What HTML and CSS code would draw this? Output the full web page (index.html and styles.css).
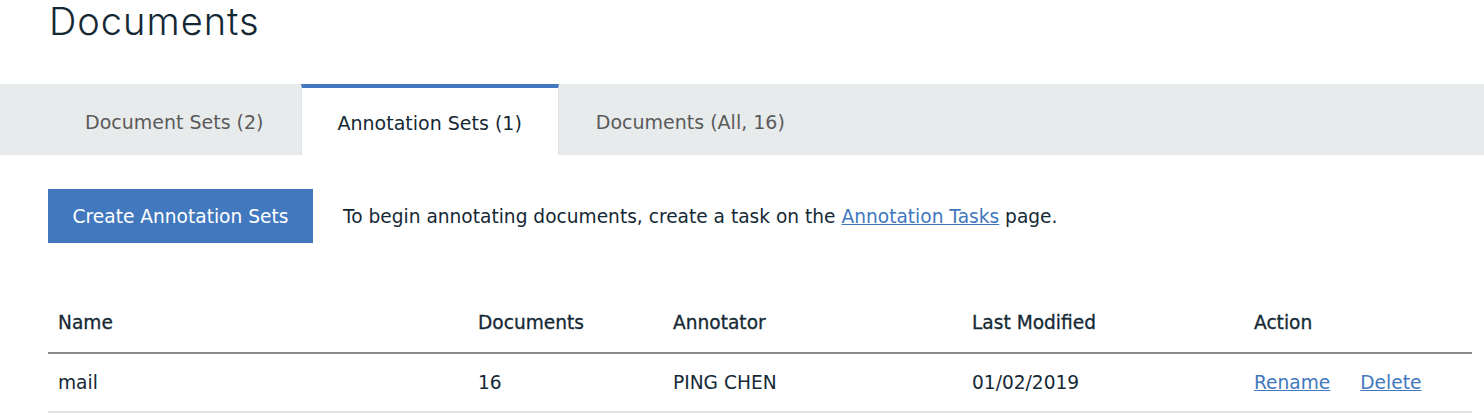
FILE: index.html
```html
<!DOCTYPE html>
<html>
<head>
<meta charset="utf-8">
<link rel="stylesheet" href="styles.css">
</head>
<body>
<h1 class="title">Documents</h1>
<div class="tabs">
  <div class="tab">Document Sets (2)</div>
  <div class="tab active">Annotation Sets (1)</div>
  <div class="tab">Documents (All, 16)</div>
</div>
<div class="toolbar">
  <button class="btn">Create Annotation Sets</button>
  <p class="hint">To begin annotating documents, create a task on the <a href="#" class="link">Annotation Tasks</a> page.</p>
</div>
<table class="table">
  <thead>
    <tr>
      <th class="c-name">Name</th>
      <th class="c-docs">Documents</th>
      <th class="c-ann">Annotator</th>
      <th class="c-mod">Last Modified</th>
      <th class="c-act">Action</th>
    </tr>
  </thead>
  <tbody>
    <tr>
      <td>mail</td>
      <td>16</td>
      <td>PING CHEN</td>
      <td>01/02/2019</td>
      <td><a href="#" class="link">Rename</a><a href="#" class="link gap">Delete</a></td>
    </tr>
  </tbody>
</table>
</body>
</html>
```
FILE: styles.css
```css
* { box-sizing: border-box; }
body {
  margin: 0;
  font-family: "DejaVu Sans", "Noto Sans", sans-serif;
  color: #152935;
  background: #fff;
  overflow: hidden;
}
.title {
  margin: 0;
  padding: 0 0 0 49px;
  height: 84px;
  font-family: Inter, "Noto Sans", sans-serif;
  font-size: 38px;
  font-weight: 300;
  letter-spacing: 1px;
  line-height: 42px;
  color: #152935;
}
.tabs {
  display: flex;
  height: 71px;
  background: #e8ebec;
  padding-left: 48px;
}
.tab {
  display: flex;
  align-items: center;
  padding: 0 37px;
  font-size: 19px;
  color: #5a5a5a;
  border-top: 4px solid transparent;
}
.tab.active {
  background: #fff;
  color: #152935;
  border-top: 4px solid #4178be;
  border-left: 1px solid #dfe3e6;
  border-right: 1px solid #dfe3e6;
  padding: 2px 36px 0;
}
.toolbar {
  display: flex;
  align-items: center;
  padding: 34px 0 0 48px;
  gap: 30px;
}
.btn {
  height: 54px;
  width: 265px;
  border: 0;
  background: #4178be;
  color: #fff;
  font-family: inherit;
  font-size: 18.6px;
  padding: 0;
}
.hint {
  margin: 0;
  font-size: 18.6px;
  color: #152935;
}
.link {
  color: #4178be;
  text-decoration: underline;
}
.table {
  margin: 50px 0 0 48px;
  width: 1424px;
  border-collapse: collapse;
  font-size: 18.6px;
}
.table th {
  text-align: left;
  font-weight: 500;
  -webkit-text-stroke: 0.3px currentColor;
  height: 60px;
  padding: 0 10px;
  border-bottom: 2px solid #8c8c8c;
  color: #152935;
}
.table td {
  height: 59px;
  padding: 0 10px;
  border-bottom: 2px solid #dfe3e6;
  color: #152935;
}
.c-name { width: 420px; }
.c-docs { width: 195px; }
.c-ann { width: 299px; }
.c-mod { width: 282px; }
.gap { margin-left: 30px; }
```
